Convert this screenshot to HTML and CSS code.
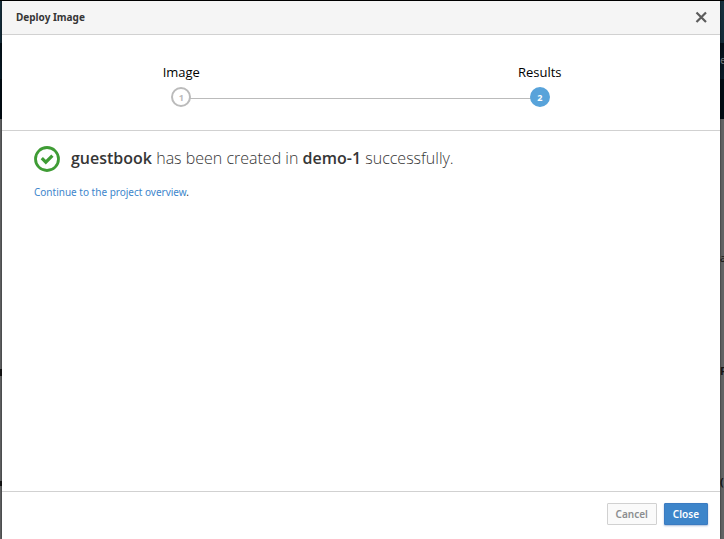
FILE: index.html
```html
<!DOCTYPE html>
<html lang="en">
<head>
<meta charset="utf-8">
<title>Deploy Image</title>
<link rel="stylesheet" href="styles.css">
</head>
<body>
<div class="backdrop" aria-hidden="true">
  <span class="peek peek-nav">e</span>
  <span class="peek peek-first">a</span>
  <span class="peek peek-second">Fi</span>
  <span class="peek peek-third">(</span>
  <span class="mark mark-top"></span>
  <span class="mark mark-bottom"></span>
</div>
<div class="modal" role="dialog" aria-labelledby="title">
  <header class="modal-header">
    <h1 class="modal-title" id="title">Deploy Image</h1>
    <button class="dismiss" type="button" aria-label="Close dialog">
      <svg width="12" height="12" viewBox="0 0 12 12"><path d="M1.5 1.5 11 11M11 1.5 1.5 11" fill="none" stroke="#5c5c5c" stroke-width="2.2"/></svg>
    </button>
  </header>
  <ol class="steps">
    <li class="step"><span class="step-label">Image</span><span class="step-number">1</span></li>
    <li class="step active"><span class="step-label">Results</span><span class="step-number">2</span></li>
  </ol>
  <main class="modal-body">
    <div class="result">
      <svg class="ok-icon" width="26" height="26" viewBox="0 0 26 26"><circle cx="13" cy="13" r="11.5" fill="none" stroke="#3f9c35" stroke-width="2.8"/><path d="M7.8 12.2 11.8 16.2 18.4 9.6" fill="none" stroke="#3f9c35" stroke-width="3.2"/></svg>
      <h2 class="result-text"><strong>guestbook</strong> has been created in <strong>demo-1</strong> successfully.</h2>
    </div>
    <p class="next"><a href="#">Continue to the project overview</a>.</p>
  </main>
  <footer class="modal-footer">
    <button class="btn" type="button" disabled>Cancel</button>
    <button class="btn btn-primary" type="button">Close</button>
  </footer>
</div>
</body>
</html>
```
FILE: styles.css
```css
* {
  box-sizing: border-box;
}

body {
  margin: 0;
  min-height: 100vh;
  display: flex;
  padding: 1px 4px 0 2px;
  font-family: "Noto Sans", "Open Sans", sans-serif;
  font-size: 10px;
  line-height: 18px;
  color: #363636;
  background: linear-gradient(#000 1px, #17303e 1px, #132b38 43px, #030f18 43px, #0a1c28 79px, #020c14 79px, #020c14 119px, #626465 119px);
}

.backdrop {
  position: absolute;
  inset: 0;
  overflow: hidden;
}

.peek {
  position: absolute;
  left: 720px;
  color: #161616;
  font-size: 11px;
  white-space: nowrap;
}

.peek-nav {
  top: 51px;
  color: #70777b;
}

.peek-first {
  top: 249px;
}

.peek-second {
  top: 362px;
  font-weight: 700;
}

.peek-third {
  top: 473px;
  font-weight: 700;
}

.mark {
  position: absolute;
  left: 0;
  width: 2px;
  height: 7px;
  background: #161616;
}

.mark-top {
  top: 369px;
}

.mark-bottom {
  top: 481px;
  height: 5px;
}

.modal {
  position: relative;
  flex: 1;
  display: flex;
  flex-direction: column;
  background: #fff;
  box-shadow: 0 0 2px rgba(0, 0, 0, 0.7);
}

.modal-header {
  display: flex;
  align-items: center;
  justify-content: space-between;
  padding: 7px 13px 8px 14px;
  background: #f5f5f5;
  border-bottom: 1px solid #d1d1d1;
}

.modal-title {
  margin: 0;
  font-size: 10px;
  font-weight: 700;
  line-height: 18px;
}

.dismiss {
  display: flex;
  padding: 0;
  border: 0;
  background: none;
}

.steps {
  display: flex;
  margin: 0;
  padding: 27px 1px 23px 0;
  list-style: none;
  border-bottom: 1px solid #d1d1d1;
}

.step {
  position: relative;
  flex: 1;
  display: flex;
  flex-direction: column;
  align-items: center;
  gap: 5px;
  color: #000;
}

.step:first-child::after {
  content: "";
  position: absolute;
  left: 50%;
  bottom: 8px;
  width: 100%;
  height: 1px;
  background: #bbb;
}

.step-label {
  font-family: "Open Sans", sans-serif;
  font-size: 13px;
  line-height: 20px;
}

.step-number {
  position: relative;
  z-index: 1;
  width: 20px;
  height: 20px;
  border: 2px solid #bbb;
  border-radius: 50%;
  background: #fff;
  color: #bbb;
  font-family: "Open Sans", sans-serif;
  font-size: 9px;
  font-weight: 700;
  line-height: 17px;
  text-align: center;
}

.active .step-number {
  border-color: #58a3da;
  background: #58a3da;
  color: #fff;
}

.modal-body {
  flex: 1;
  padding: 14px 32px;
}

.result {
  display: flex;
  align-items: center;
  gap: 11px;
}

.result-text {
  margin: 0;
  padding-bottom: 2px;
  font-family: "Open Sans", sans-serif;
  font-size: 16px;
  font-weight: 300;
  line-height: 26px;
}

.result-text strong {
  font-weight: 600;
}

.next {
  margin: 10px 0 0;
}

.next a {
  color: #3d86cc;
  text-decoration: none;
}

.modal-footer {
  display: flex;
  justify-content: flex-end;
  gap: 7px;
  padding: 11px 12px 14px;
  border-top: 1px solid #d1d1d1;
}

.btn {
  padding: 1px 8px;
  border: 1px solid #d1d1d1;
  border-radius: 1px;
  background: #fafafa;
  color: #8b8d8f;
  font-family: inherit;
  font-size: 10px;
  font-weight: 600;
  line-height: 18px;
}

.btn-primary {
  border-color: #3b7bc1;
  background: #3d85ca;
  color: #fff;
  box-shadow: 0 1px 2px rgba(40, 90, 160, 0.4);
}
```
